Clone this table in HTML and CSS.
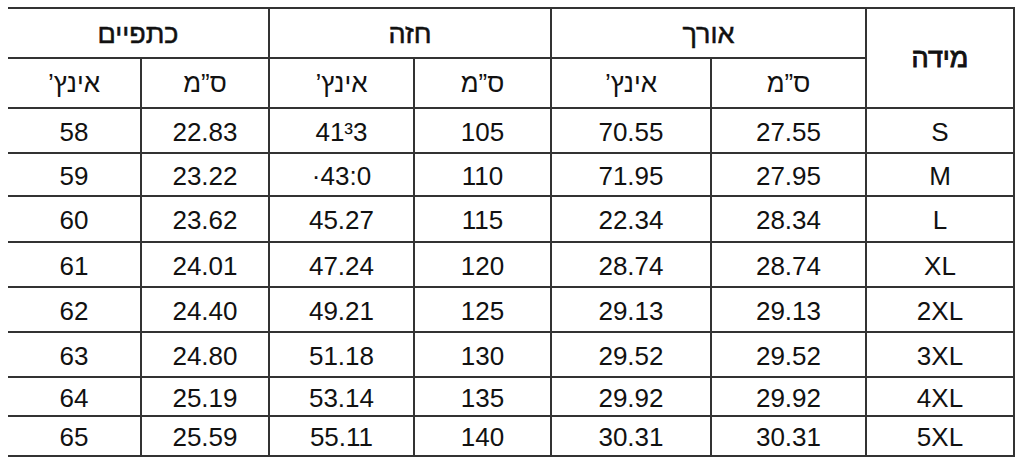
FILE: index.html
```html
<!DOCTYPE html>
<html lang="he" dir="rtl">
<head>
<meta charset="utf-8">
<link rel="stylesheet" href="styles.css">
</head>
<body>
<table class="size-table">
  <colgroup>
    <col class="c-size">
    <col class="c-len-cm">
    <col class="c-len-in">
    <col class="c-chest-cm">
    <col class="c-chest-in">
    <col class="c-sh-cm">
    <col class="c-sh-in">
  </colgroup>
  <thead>
    <tr class="h1">
      <th rowspan="2" class="main">מידה</th>
      <th colspan="2" class="group">אורך</th>
      <th colspan="2" class="group">חזה</th>
      <th colspan="2" class="group">כתפיים</th>
    </tr>
    <tr class="h2">
      <th>ס”מ</th><th>אינץ’</th>
      <th>ס”מ</th><th>אינץ’</th>
      <th>ס”מ</th><th>אינץ’</th>
    </tr>
  </thead>
  <tbody>
    <tr class="r45"><td>S</td><td>27.55</td><td>70.55</td><td>105</td><td>41³3</td><td>22.83</td><td>58</td></tr>
    <tr class="r43"><td>M</td><td>27.95</td><td>71.95</td><td>110</td><td>·43:0</td><td>23.22</td><td>59</td></tr>
    <tr class="r46"><td>L</td><td>28.34</td><td>22.34</td><td>115</td><td>45.27</td><td>23.62</td><td>60</td></tr>
    <tr class="r45"><td>XL</td><td>28.74</td><td>28.74</td><td>120</td><td>47.24</td><td>24.01</td><td>61</td></tr>
    <tr class="r45"><td>2XL</td><td>29.13</td><td>29.13</td><td>125</td><td>49.21</td><td>24.40</td><td>62</td></tr>
    <tr class="r45"><td>3XL</td><td>29.52</td><td>29.52</td><td>130</td><td>51.18</td><td>24.80</td><td>63</td></tr>
    <tr class="r39"><td>4XL</td><td>29.92</td><td>29.92</td><td>135</td><td>53.14</td><td>25.19</td><td>64</td></tr>
    <tr class="r40"><td>5XL</td><td>30.31</td><td>30.31</td><td>140</td><td>55.11</td><td>25.59</td><td>65</td></tr>
  </tbody>
</table>
</body>
</html>
```

FILE: styles.css
```css
html, body {
  background: #ffffff;
}
body {
  margin: 7px 9px 0 8px;
  font-family: "Liberation Sans", "DejaVu Sans", Arial, sans-serif;
  color: #111111;
}
.size-table {
  border-collapse: collapse;
  table-layout: fixed;
  width: 1007px;
  margin: 0;
}
.c-size { width: 148px; }
.c-len-cm { width: 155px; }
.c-len-in { width: 160px; }
.c-chest-cm { width: 137px; }
.c-chest-in { width: 145px; }
.c-sh-cm { width: 128px; }
.c-sh-in { width: 134px; }

.size-table th,
.size-table td {
  border: 2px solid #333333;
  padding: 0;
  text-align: center;
  vertical-align: middle;
  font-size: 26px;
  font-weight: normal;
  line-height: 1;
}
.size-table td {
  direction: ltr;
  padding-top: 2px;
}
.size-table th.main {
  font-size: 27px;
  -webkit-text-stroke: 0.9px #111111;
}
.size-table th.group {
  font-size: 27px;
  padding-top: 2px;
  -webkit-text-stroke: 0.5px #111111;
}
.h1 { height: 50px; }
.h2 { height: 50px; }
.r45 { height: 45px; }
.r43 { height: 43px; }
.r46 { height: 46px; }
.r39 { height: 39px; }
.r40 { height: 40px; }
```
